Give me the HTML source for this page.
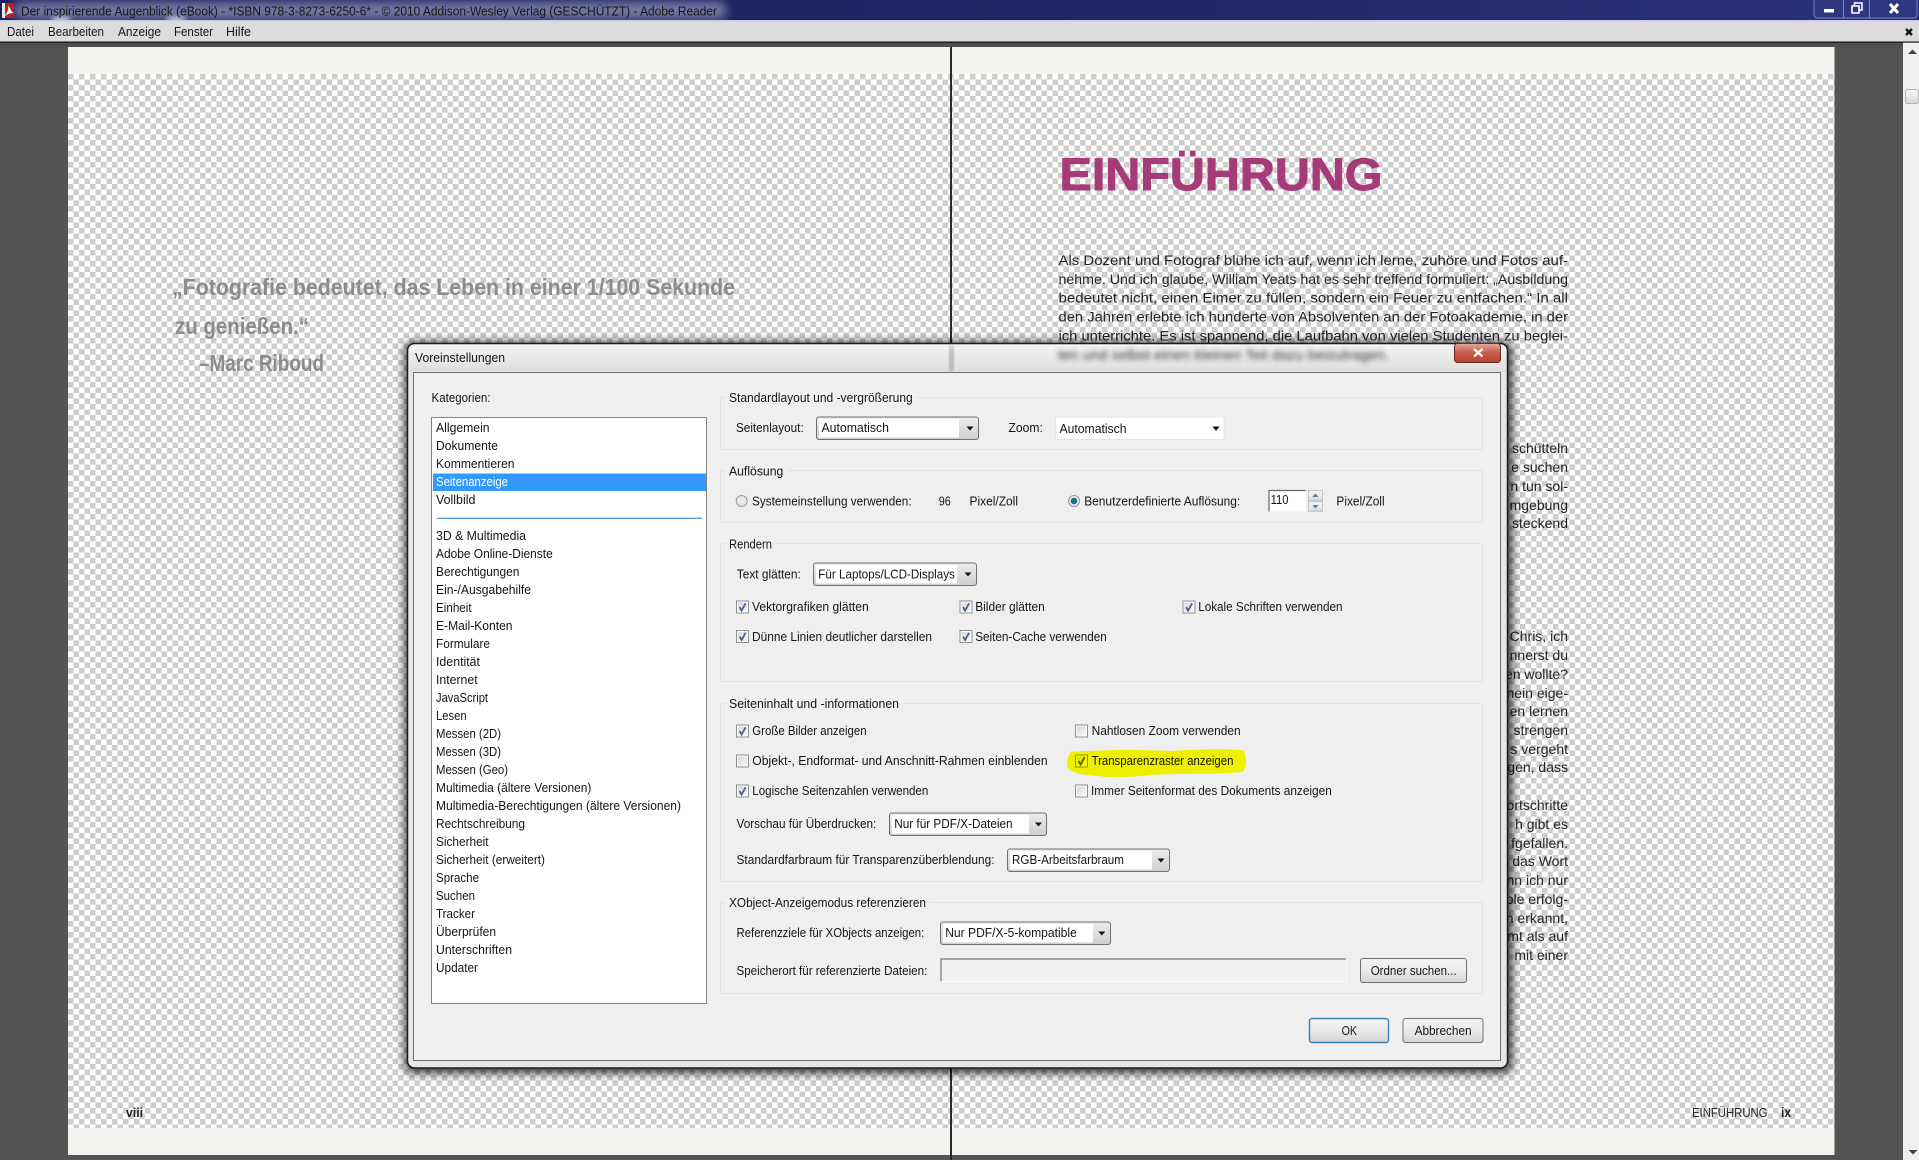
<!DOCTYPE html>
<html lang="de"><head><meta charset="utf-8"><title>Adobe Reader – Voreinstellungen</title>
<style>
html,body{margin:0;padding:0;width:1919px;height:1160px;overflow:hidden;background:#545454}
svg{display:block}
text{font-family:"Liberation Sans",sans-serif;font-size:12.5px;fill:#151515}
.p text{font-size:14px;fill:#242424}
.q text{font-size:23px;font-weight:bold;fill:#8c8c8c}
</style></head><body>
<svg xmlns="http://www.w3.org/2000/svg" width="1919" height="1160" viewBox="0 0 1919 1160">
<defs>
<pattern id="chk" x="68" y="74" width="11" height="11" patternUnits="userSpaceOnUse">
<rect width="11" height="11" fill="#fff"/><rect width="5.5" height="5.5" fill="#cdcdcd"/><rect x="5.5" y="5.5" width="5.5" height="5.5" fill="#cdcdcd"/>
</pattern>
<linearGradient id="tb" x1="0" x2="1" y1="0" y2="0"><stop offset="0" stop-color="#1b205a"/><stop offset=".5" stop-color="#1e2564"/><stop offset="1" stop-color="#2a3178"/></linearGradient>
<linearGradient id="fr" x1="0" x2="0" y1="0" y2="1"><stop offset="0" stop-color="#f4f4f4"/><stop offset="1" stop-color="#dedede"/></linearGradient>
<linearGradient id="btn" x1="0" x2="0" y1="0" y2="1"><stop offset="0" stop-color="#f4f4f4"/><stop offset=".5" stop-color="#ebebeb"/><stop offset="1" stop-color="#d4d4d4"/></linearGradient>
<linearGradient id="arr" x1="0" x2="0" y1="0" y2="1"><stop offset="0" stop-color="#ededed"/><stop offset="1" stop-color="#cfcfcf"/></linearGradient>
<linearGradient id="cl" x1="0" x2="0" y1="0" y2="1"><stop offset="0" stop-color="#e6ab9e"/><stop offset=".45" stop-color="#c9604f"/><stop offset="1" stop-color="#b8422f"/></linearGradient>
<linearGradient id="cbg" x1="0" x2="1" y1="0" y2="1"><stop offset="0" stop-color="#d8d8d8"/><stop offset="1" stop-color="#f8f8f8"/></linearGradient>
<filter id="b2" x="-10%" y="-100%" width="120%" height="300%"><feGaussianBlur stdDeviation="2.6"/></filter>
<filter id="b4" x="-10%" y="-100%" width="120%" height="300%"><feGaussianBlur stdDeviation="5"/></filter>
<filter id="sh" x="-5%" y="-5%" width="110%" height="110%"><feGaussianBlur stdDeviation="5"/></filter>
<symbol id="cb" width="13" height="13" viewBox="0 0 13 13"><rect x=".5" y=".5" width="12" height="12" fill="#fff" stroke="#8e8f8f"/><rect x="2" y="2" width="9" height="9" fill="url(#cbg)"/></symbol>
<symbol id="cc" width="13" height="13" viewBox="0 0 13 13"><rect x=".5" y=".5" width="12" height="12" fill="#fff" stroke="#8e8f8f"/><rect x="2" y="2" width="9" height="9" fill="url(#cbg)"/><path d="M3.6 6.6 L5.6 10 L9.6 2.8" fill="none" stroke="#4a5f97" stroke-width="1.8"/></symbol>
</defs>

<!-- workspace -->
<rect width="1919" height="1160" fill="#545454"/>
<rect x="68" y="47" width="1766.5" height="1108" fill="#f4f3ef"/>
<rect x="68" y="74" width="1766.5" height="1054" fill="url(#chk)"/>
<rect x="950" y="42" width="2" height="1118" fill="#2a2a2a"/>

<!-- scrollbar -->
<rect x="1903" y="42" width="16" height="1118" fill="#f0f0f0"/>
<path d="M1908 54 L1912.5 49.5 L1917 54Z" fill="#444"/>
<rect x="1905.5" y="89.5" width="13" height="14" rx="2" fill="url(#btn)" stroke="#b5b5b5"/>
<path d="M1908.5 1150 L1913 1154.5 L1917.5 1150Z" fill="#444"/>

<!-- title bar -->
<rect width="1919" height="20" fill="url(#tb)"/>
<rect x="14" y="2" width="712" height="17" rx="6" fill="#a4a8c8" opacity=".66" filter="url(#b4)"/>
<ellipse cx="61" cy="20" rx="10" ry="3" fill="#fff" opacity=".85" filter="url(#b2)"/>
<ellipse cx="176" cy="20" rx="10" ry="3" fill="#fff" opacity=".85" filter="url(#b2)"/>
<rect y="20" width="1919" height="1.5" fill="#c7cbe6"/>
<rect x="2" y="3" width="12" height="15" fill="#c01e1e"/>
<rect x="2" y="3" width="3" height="15" fill="#e9e9e9"/>
<path d="M4 17 C8 12 9 8 8 5 C11 9 11 12 14 13 C10 13 7 14 4 17Z" fill="#fff"/>
<text x="21" y="15.5" textLength="696" lengthAdjust="spacingAndGlyphs">Der inspirierende Augenblick (eBook) - *ISBN 978-3-8273-6250-6* - © 2010 Addison-Wesley Verlag (GESCHÜTZT) - Adobe Reader</text>
<path d="M1814 0 V14 Q1814 18 1818 18 H1913 Q1917 18 1917 14 V0" fill="#3a4390" fill-opacity=".35" stroke="#7d84b8"/>
<path d="M1843.5 0V18M1869.5 0V18" stroke="#7d84b8"/>
<rect x="1824" y="9" width="10" height="3.5" fill="#fff"/>
<path d="M1852 6H1859V13H1852ZM1854.5 6V3H1862V10H1859" fill="none" stroke="#fff" stroke-width="1.6"/>
<path d="M1890 4L1898 13M1898 4L1890 13" stroke="#fff" stroke-width="3"/>

<!-- menu bar -->
<rect y="21.5" width="1919" height="20" fill="#dcdcdc"/>
<rect y="41.5" width="1919" height="1.2" fill="#111"/>
<rect y="43" width="1903" height="4" fill="#4e4e4e"/>
<text x="7" y="36" textLength="27" lengthAdjust="spacingAndGlyphs">Datei</text>
<text x="48" y="36" textLength="56" lengthAdjust="spacingAndGlyphs">Bearbeiten</text>
<text x="118" y="36" textLength="43" lengthAdjust="spacingAndGlyphs">Anzeige</text>
<text x="174" y="36" textLength="39" lengthAdjust="spacingAndGlyphs">Fenster</text>
<text x="226" y="36" textLength="25" lengthAdjust="spacingAndGlyphs">Hilfe</text>
<path d="M1906 29L1912 35M1912 29L1906 35" stroke="#111" stroke-width="2.4"/>

<!-- left page -->
<g class="q">
<text x="172" y="295" textLength="563" lengthAdjust="spacingAndGlyphs">„Fotografie bedeutet, das Leben in einer 1/100 Sekunde</text>
<text x="175" y="334" textLength="134" lengthAdjust="spacingAndGlyphs">zu genießen.“</text>
<text x="199" y="371" textLength="125" lengthAdjust="spacingAndGlyphs">–Marc Riboud</text>
</g>
<text x="126" y="1117" textLength="17" lengthAdjust="spacingAndGlyphs" style="font-size:13px;font-weight:bold;fill:#222">viii</text>

<!-- right page -->
<text x="1059.5" y="190" textLength="323" lengthAdjust="spacingAndGlyphs" style="font-size:45.5px;font-weight:bold;fill:#a63b79;stroke:#a63b79;stroke-width:1">EINFÜHRUNG</text>
<g class="p">
<text x="1058.5" y="265" textLength="509.5" lengthAdjust="spacingAndGlyphs">Als Dozent und Fotograf blühe ich auf, wenn ich lerne, zuhöre und Fotos auf-</text>
<text x="1058.5" y="284" textLength="509.5" lengthAdjust="spacingAndGlyphs">nehme. Und ich glaube, William Yeats hat es sehr treffend formuliert: „Ausbildung</text>
<text x="1058.5" y="302.7" textLength="509.5" lengthAdjust="spacingAndGlyphs">bedeutet nicht, einen Eimer zu füllen, sondern ein Feuer zu entfachen.“ In all</text>
<text x="1058.5" y="321.6" textLength="509.5" lengthAdjust="spacingAndGlyphs">den Jahren erlebte ich hunderte von Absolventen an der Fotoakademie, in der</text>
<text x="1058.5" y="340.5" textLength="509.5" lengthAdjust="spacingAndGlyphs">ich unterrichte. Es ist spannend, die Laufbahn von vielen Studenten zu beglei-</text>
</g>
<g class="p" text-anchor="end">
<text x="1568" y="453">schütteln</text>
<text x="1568" y="472">e suchen</text>
<text x="1568" y="491">n tun sol-</text>
<text x="1568" y="510">mgebung</text>
<text x="1568" y="528">steckend</text>
<text x="1568" y="641">Chris, ich</text>
<text x="1568" y="660">nnerst du</text>
<text x="1568" y="679">en wollte?</text>
<text x="1568" y="698">nein eige-</text>
<text x="1568" y="716">en lernen</text>
<text x="1568" y="735">strengen</text>
<text x="1568" y="754">s vergeht</text>
<text x="1568" y="772">gen, dass</text>
<text x="1568" y="810">ortschritte</text>
<text x="1568" y="829">h gibt es</text>
<text x="1568" y="848">fgefallen.</text>
<text x="1568" y="866">das Wort</text>
<text x="1568" y="885">nn ich nur</text>
<text x="1568" y="904">ble erfolg-</text>
<text x="1568" y="923">n erkannt,</text>
<text x="1568" y="941">mt als auf</text>
<text x="1568" y="960">mit einer</text>
</g>
<text x="1692" y="1117" textLength="75.5" lengthAdjust="spacingAndGlyphs" style="font-size:12.5px;fill:#2a2a2a">EINFÜHRUNG</text>
<text x="1781" y="1117" textLength="10" lengthAdjust="spacingAndGlyphs" style="font-size:14px;font-weight:bold;fill:#222">ix</text>

<!-- dialog shadow and frame -->
<rect x="405" y="342" width="1107" height="731" rx="8" fill="#000" opacity=".8" filter="url(#sh)"/>
<rect x="407.5" y="343.5" width="1100" height="724.5" rx="7" fill="#e6e6e6" stroke="#1c1c1c" stroke-width="1.5"/>
<path d="M408.5 372V351Q408.5 344.5 415 344.5H1500Q1506.5 344.5 1506.5 351V372Z" fill="url(#fr)"/>
<text x="1058" y="359.5" textLength="331" lengthAdjust="spacingAndGlyphs" filter="url(#b2)" style="font-size:14px;fill:#333">ten und selbst einen kleinen Teil dazu beizutragen.</text>
<rect x="949" y="346" width="5" height="26" fill="#666" opacity=".5" filter="url(#b2)"/>
<text x="415" y="362" textLength="90" lengthAdjust="spacingAndGlyphs">Voreinstellungen</text>
<rect x="1454.5" y="343.5" width="46" height="19" rx="3" fill="url(#cl)" stroke="#6d2a24"/>
<path d="M1474 349L1482.5 356.5M1482.5 349L1474 356.5" stroke="#fff" stroke-width="2.2"/>
<rect x="413.5" y="372.5" width="1087" height="688" fill="#f0f0f0" stroke="#6e6e6e"/>

<!-- category list -->
<text x="431.5" y="402" textLength="59" lengthAdjust="spacingAndGlyphs">Kategorien:</text>
<rect x="431.5" y="417.5" width="275" height="586" fill="#fff" stroke="#828282"/>
<rect x="433" y="473.5" width="273" height="17.5" fill="#3399ff"/>
<rect x="437" y="517.7" width="265" height="1.2" fill="#3d8fdc"/>
<g>
<text x="436" y="432" textLength="53.6" lengthAdjust="spacingAndGlyphs">Allgemein</text>
<text x="436" y="450" textLength="62" lengthAdjust="spacingAndGlyphs">Dokumente</text>
<text x="436" y="468" textLength="78.5" lengthAdjust="spacingAndGlyphs">Kommentieren</text>
<text x="436" y="486" textLength="72" lengthAdjust="spacingAndGlyphs" style="fill:#fff">Seitenanzeige</text>
<text x="436" y="504" textLength="39.4" lengthAdjust="spacingAndGlyphs">Vollbild</text>
<text x="436" y="540" textLength="90" lengthAdjust="spacingAndGlyphs">3D &amp; Multimedia</text>
<text x="436" y="558" textLength="116.7" lengthAdjust="spacingAndGlyphs">Adobe Online-Dienste</text>
<text x="436" y="576" textLength="83.4" lengthAdjust="spacingAndGlyphs">Berechtigungen</text>
<text x="436" y="594" textLength="95" lengthAdjust="spacingAndGlyphs">Ein-/Ausgabehilfe</text>
<text x="436" y="612" textLength="35.6" lengthAdjust="spacingAndGlyphs">Einheit</text>
<text x="436" y="630" textLength="76.5" lengthAdjust="spacingAndGlyphs">E-Mail-Konten</text>
<text x="436" y="648" textLength="54" lengthAdjust="spacingAndGlyphs">Formulare</text>
<text x="436" y="666" textLength="44" lengthAdjust="spacingAndGlyphs">Identität</text>
<text x="436" y="684" textLength="41.6" lengthAdjust="spacingAndGlyphs">Internet</text>
<text x="436" y="702" textLength="52" lengthAdjust="spacingAndGlyphs">JavaScript</text>
<text x="436" y="720" textLength="30.6" lengthAdjust="spacingAndGlyphs">Lesen</text>
<text x="436" y="738" textLength="65" lengthAdjust="spacingAndGlyphs">Messen (2D)</text>
<text x="436" y="756" textLength="65" lengthAdjust="spacingAndGlyphs">Messen (3D)</text>
<text x="436" y="774" textLength="72" lengthAdjust="spacingAndGlyphs">Messen (Geo)</text>
<text x="436" y="792" textLength="155.4" lengthAdjust="spacingAndGlyphs">Multimedia (ältere Versionen)</text>
<text x="436" y="810" textLength="245" lengthAdjust="spacingAndGlyphs">Multimedia-Berechtigungen (ältere Versionen)</text>
<text x="436" y="828" textLength="89" lengthAdjust="spacingAndGlyphs">Rechtschreibung</text>
<text x="436" y="846" textLength="52.6" lengthAdjust="spacingAndGlyphs">Sicherheit</text>
<text x="436" y="864" textLength="109" lengthAdjust="spacingAndGlyphs">Sicherheit (erweitert)</text>
<text x="436" y="882" textLength="43" lengthAdjust="spacingAndGlyphs">Sprache</text>
<text x="436" y="900" textLength="39" lengthAdjust="spacingAndGlyphs">Suchen</text>
<text x="436" y="918" textLength="39" lengthAdjust="spacingAndGlyphs">Tracker</text>
<text x="436" y="936" textLength="60" lengthAdjust="spacingAndGlyphs">Überprüfen</text>
<text x="436" y="954" textLength="76" lengthAdjust="spacingAndGlyphs">Unterschriften</text>
<text x="436" y="972" textLength="42" lengthAdjust="spacingAndGlyphs">Updater</text>
</g>

<!-- group boxes -->
<g fill="#efefef" stroke="#e2e2e2">
<rect x="720.5" y="397.5" width="762" height="52" rx="2"/>
<rect x="720.5" y="470.5" width="762" height="52" rx="2"/>
<rect x="720.5" y="543.5" width="762" height="138" rx="2"/>
<rect x="720.5" y="703.5" width="762" height="178" rx="2"/>
<rect x="720.5" y="902.5" width="762" height="91" rx="2"/>
</g>
<g fill="#f0f0f0">
<rect x="725" y="394" width="192" height="9"/>
<rect x="725" y="467" width="62" height="9"/>
<rect x="725" y="540" width="51" height="9"/>
<rect x="725" y="700" width="178" height="9"/>
<rect x="725" y="899" width="205" height="9"/>
</g>
<text x="729" y="402" textLength="183.7" lengthAdjust="spacingAndGlyphs">Standardlayout und -vergrößerung</text>
<text x="729" y="475.5" textLength="54.3" lengthAdjust="spacingAndGlyphs">Auflösung</text>
<text x="729" y="548.5" textLength="43" lengthAdjust="spacingAndGlyphs">Rendern</text>
<text x="729" y="708" textLength="170" lengthAdjust="spacingAndGlyphs">Seiteninhalt und -informationen</text>
<text x="729" y="907" textLength="197" lengthAdjust="spacingAndGlyphs">XObject-Anzeigemodus referenzieren</text>

<!-- group 1 -->
<text x="736" y="432" textLength="67.7" lengthAdjust="spacingAndGlyphs">Seitenlayout:</text>
<rect x="816.5" y="417" width="162" height="22.5" rx="2.5" fill="url(#arr)" stroke="#6f6f6f"/>
<rect x="819" y="419" width="140" height="18.5" fill="#fff"/>
<text x="821.5" y="432" textLength="67.4" lengthAdjust="spacingAndGlyphs">Automatisch</text>
<path d="M966.5 426.5H973.5L970 430.5Z" fill="#111"/>
<text x="1008.5" y="432" textLength="34.4" lengthAdjust="spacingAndGlyphs">Zoom:</text>
<rect x="1055.5" y="417" width="168.5" height="22.5" fill="#fff" stroke="#e4e4e4"/>
<text x="1059.5" y="433" textLength="67" lengthAdjust="spacingAndGlyphs">Automatisch</text>
<path d="M1212.5 426.5H1219.5L1216 431Z" fill="#111"/>

<!-- group 2 -->
<circle cx="741.7" cy="501" r="5.5" fill="#e8e8e8" stroke="#9a9a9a"/>
<text x="752" y="505.5" textLength="159.6" lengthAdjust="spacingAndGlyphs">Systemeinstellung verwenden:</text>
<text x="938.8" y="505.5" textLength="12" lengthAdjust="spacingAndGlyphs">96</text>
<text x="969.5" y="505.5" textLength="48.5" lengthAdjust="spacingAndGlyphs">Pixel/Zoll</text>
<circle cx="1074" cy="501" r="5.5" fill="#e8eef2" stroke="#8f9aa4"/>
<circle cx="1074" cy="501" r="3.3" fill="#1f6f95"/>
<text x="1084.2" y="505.5" textLength="156" lengthAdjust="spacingAndGlyphs">Benutzerdefinierte Auflösung:</text>
<rect x="1268.5" y="490" width="37" height="21.5" fill="#fff"/>
<path d="M1269 511.5V490.5H1305.5" fill="none" stroke="#666" stroke-width="1.2"/>
<text x="1270.6" y="504" textLength="18" lengthAdjust="spacingAndGlyphs">110</text>
<rect x="1308.5" y="490.5" width="14" height="10" fill="url(#btn)" stroke="#c6c6c6"/>
<rect x="1308.5" y="501.5" width="14" height="10" fill="url(#btn)" stroke="#c6c6c6"/>
<path d="M1312.5 497L1315.5 493.5L1318.5 497Z" fill="#5a76a8"/>
<path d="M1312.5 505L1315.5 508.5L1318.5 505Z" fill="#5a76a8"/>
<text x="1336.4" y="505.5" textLength="48.2" lengthAdjust="spacingAndGlyphs">Pixel/Zoll</text>

<!-- group 3 -->
<text x="736.8" y="578.5" textLength="64" lengthAdjust="spacingAndGlyphs">Text glätten:</text>
<rect x="813.5" y="563" width="163" height="22.5" rx="2.5" fill="url(#arr)" stroke="#6f6f6f"/>
<rect x="816" y="565" width="141" height="18.5" fill="#fff"/>
<text x="818.3" y="578.5" textLength="136.6" lengthAdjust="spacingAndGlyphs">Für Laptops/LCD-Displays</text>
<path d="M964.5 572.5H971.5L968 576.5Z" fill="#111"/>
<use href="#cc" x="736" y="600.5"/>
<text x="752" y="611" textLength="116.7" lengthAdjust="spacingAndGlyphs">Vektorgrafiken glätten</text>
<use href="#cc" x="959.5" y="600.5"/>
<text x="975.2" y="611" textLength="69.6" lengthAdjust="spacingAndGlyphs">Bilder glätten</text>
<use href="#cc" x="1182.5" y="600.5"/>
<text x="1198.2" y="611" textLength="144.3" lengthAdjust="spacingAndGlyphs">Lokale Schriften verwenden</text>
<use href="#cc" x="736" y="630"/>
<text x="752" y="641" textLength="180" lengthAdjust="spacingAndGlyphs">Dünne Linien deutlicher darstellen</text>
<use href="#cc" x="959.5" y="630"/>
<text x="975.2" y="641" textLength="131.6" lengthAdjust="spacingAndGlyphs">Seiten-Cache verwenden</text>

<!-- group 4 -->
<use href="#cc" x="736" y="724.5"/>
<text x="752.3" y="735" textLength="114.3" lengthAdjust="spacingAndGlyphs">Große Bilder anzeigen</text>
<use href="#cb" x="1075" y="724.5"/>
<text x="1091.6" y="735" textLength="149" lengthAdjust="spacingAndGlyphs">Nahtlosen Zoom verwenden</text>
<use href="#cb" x="736" y="754.5"/>
<text x="752.3" y="765" textLength="295.4" lengthAdjust="spacingAndGlyphs">Objekt-, Endformat- und Anschnitt-Rahmen einblenden</text>
<use href="#cc" x="1075" y="754.5"/>
<text x="1091.6" y="765" textLength="141.8" lengthAdjust="spacingAndGlyphs">Transparenzraster anzeigen</text>
<path d="M1071 752C1110 749 1150 750 1170 751C1200 749 1225 749 1243 750C1247 756 1247 769 1242 772C1215 775 1180 773 1150 775C1135 777 1112 778 1098 776C1085 775 1072 774 1067 767C1067 760 1068 755 1071 752Z" fill="#ffff00" style="mix-blend-mode:multiply"/>
<use href="#cc" x="736" y="784.5"/>
<text x="752.3" y="795" textLength="176" lengthAdjust="spacingAndGlyphs">Logische Seitenzahlen verwenden</text>
<use href="#cb" x="1075" y="784.5"/>
<text x="1091" y="795" textLength="240.8" lengthAdjust="spacingAndGlyphs">Immer Seitenformat des Dokuments anzeigen</text>
<text x="736.5" y="828" textLength="139.8" lengthAdjust="spacingAndGlyphs">Vorschau für Überdrucken:</text>
<rect x="889.5" y="813" width="157" height="22.5" rx="2.5" fill="url(#arr)" stroke="#6f6f6f"/>
<rect x="892" y="815" width="137" height="18.5" fill="#fff"/>
<text x="894.2" y="828" textLength="118.4" lengthAdjust="spacingAndGlyphs">Nur für PDF/X-Dateien</text>
<path d="M1035 822.5H1042L1038.5 826.5Z" fill="#111"/>
<text x="736.5" y="864" textLength="258" lengthAdjust="spacingAndGlyphs">Standardfarbraum für Transparenzüberblendung:</text>
<rect x="1007.5" y="849" width="162" height="22.5" rx="2.5" fill="url(#arr)" stroke="#6f6f6f"/>
<rect x="1010" y="851" width="142" height="18.5" fill="#fff"/>
<text x="1012" y="864" textLength="112" lengthAdjust="spacingAndGlyphs">RGB-Arbeitsfarbraum</text>
<path d="M1157.5 858.5H1164.5L1161 862.5Z" fill="#111"/>

<!-- group 5 -->
<text x="736.5" y="937" textLength="187.8" lengthAdjust="spacingAndGlyphs">Referenzziele für XObjects anzeigen:</text>
<rect x="940.5" y="922" width="170" height="22.5" rx="2.5" fill="url(#arr)" stroke="#6f6f6f"/>
<rect x="943" y="924" width="150" height="18.5" fill="#fff"/>
<text x="945.2" y="937" textLength="131.6" lengthAdjust="spacingAndGlyphs">Nur PDF/X-5-kompatible</text>
<path d="M1098.3 931.5H1105.3L1101.8 935.5Z" fill="#111"/>
<text x="736.5" y="975" textLength="190.8" lengthAdjust="spacingAndGlyphs">Speicherort für referenzierte Dateien:</text>
<rect x="940.5" y="958.5" width="405.5" height="22.5" fill="#f0f0f0"/>
<path d="M941 981V959H1346" fill="none" stroke="#777" stroke-width="1.2"/>
<path d="M941 981.5H1346.5V959" fill="none" stroke="#fafafa"/>
<rect x="1360.5" y="958.5" width="106" height="24" rx="2.5" fill="url(#btn)" stroke="#6f6f6f"/>
<text x="1370.7" y="975" textLength="86" lengthAdjust="spacingAndGlyphs">Ordner suchen...</text>

<!-- OK / cancel -->
<rect x="1309.5" y="1018.5" width="79" height="24" rx="2.5" fill="url(#btn)" stroke="#3c7fb1" stroke-width="1.4"/>
<text x="1341.6" y="1035" textLength="15.3" lengthAdjust="spacingAndGlyphs">OK</text>
<rect x="1403" y="1018.5" width="80" height="24" rx="2.5" fill="url(#btn)" stroke="#6f6f6f"/>
<text x="1414.6" y="1035" textLength="57" lengthAdjust="spacingAndGlyphs">Abbrechen</text>
</svg>
</body></html>
